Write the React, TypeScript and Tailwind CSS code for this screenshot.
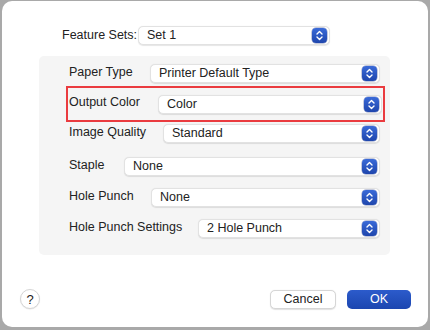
import React from 'react'

function Stepper() {
  return (
    <div className="w-[15px] h-[15px] rounded-[4px] bg-gradient-to-b from-[#3a6ad8] to-[#1f46ad] flex items-center justify-center shadow-[0_0_0_0.5px_rgba(20,40,120,0.5)]">
      <svg width="9" height="11" viewBox="0 0 9 11" fill="none" stroke="white" strokeWidth="1.4" strokeLinecap="round" strokeLinejoin="round">
        <path d="M2 4 L4.5 1.6 L7 4" />
        <path d="M2 7 L4.5 9.4 L7 7" />
      </svg>
    </div>
  )
}

function Select({ value, className = '' }: { value: string; className?: string }) {
  return (
    <div
      className={`h-[19px] bg-white rounded-[5px] border border-[#e2e2e2] shadow-[0_0.5px_1px_rgba(0,0,0,0.1)] flex items-center justify-between pl-[8px] pr-[2px] ${className}`}
    >
      <span className="text-[12.5px] text-[#222] leading-none whitespace-nowrap">{value}</span>
      <Stepper />
    </div>
  )
}

function Row({ label, labelWidth, value, className = '' }: { label: string; labelWidth: string; value: string; className?: string }) {
  return (
    <div className={`flex items-center ${className}`}>
      <span className={`${labelWidth} text-[12.5px] text-[#222] leading-none -mt-[3px] shrink-0 whitespace-nowrap`}>{label}</span>
      <Select value={value} className="flex-1" />
    </div>
  )
}

export default function App() {
  return (
    <div className="w-[430px] h-[330px] bg-[#a9a9a9] pl-[2px] pt-[1px]" style={{ fontFamily: '"Liberation Sans", Arial, sans-serif' }}>
      <div className="w-[426px] h-[326px] bg-white rounded-[10px] flex flex-col">
        {/* Feature sets */}
        <div className="flex items-center pl-[60px] pt-[25px]">
          <span className="text-[12.5px] text-[#222] leading-none w-[76px] shrink-0 whitespace-nowrap">Feature Sets:</span>
          <Select value="Set 1" className="w-[192px]" />
        </div>

        {/* Options panel */}
        <div className="mx-[37px] mt-[11px] w-[351px] bg-[#f5f5f5] rounded-[5px] pt-[8px] pb-[17px] pl-[30px] pr-[10px]">
          <Row label="Paper Type" labelWidth="w-[81px]" value="Printer Default Type" />
          <div className="-ml-[3px] mr-[-5px] mt-[3px] h-[36px] border-2 border-[#ea3b3f] flex items-center pl-[1px] pr-[1px]">
            <Row label="Output Color" labelWidth="w-[89px]" value="Color" className="flex-1" />
          </div>
          <Row label="Image Quality" labelWidth="w-[94px]" value="Standard" className="mt-[2px]" />
          <Row label="Staple" labelWidth="w-[55px]" value="None" className="mt-[14px]" />
          <Row label="Hole Punch" labelWidth="w-[82px]" value="None" className="mt-[12px]" />
          <Row label="Hole Punch Settings" labelWidth="w-[129px]" value="2 Hole Punch" className="mt-[12px]" />
        </div>

        {/* Footer */}
        <div className="mt-auto mb-[18px] flex items-center pl-[18px] pr-[17px]">
          <div className="w-[20px] h-[20px] rounded-full bg-white border border-[#d6d6d6] shadow-[0_0.5px_1px_rgba(0,0,0,0.1)] flex items-center justify-center text-[13px] text-[#222] leading-none">
            ?
          </div>
          <div className="ml-auto flex items-center gap-[11px]">
            <button className="w-[66px] h-[19px] bg-white rounded-[5px] border border-[#d6d6d6] shadow-[0_0.5px_1px_rgba(0,0,0,0.12)] text-[12.5px] text-[#222] leading-none">
              Cancel
            </button>
            <button className="w-[64px] h-[19px] rounded-[5px] bg-gradient-to-b from-[#2c5bcb] to-[#1c46b0] text-[12.5px] text-white leading-none">
              OK
            </button>
          </div>
        </div>
      </div>
    </div>
  )
}
